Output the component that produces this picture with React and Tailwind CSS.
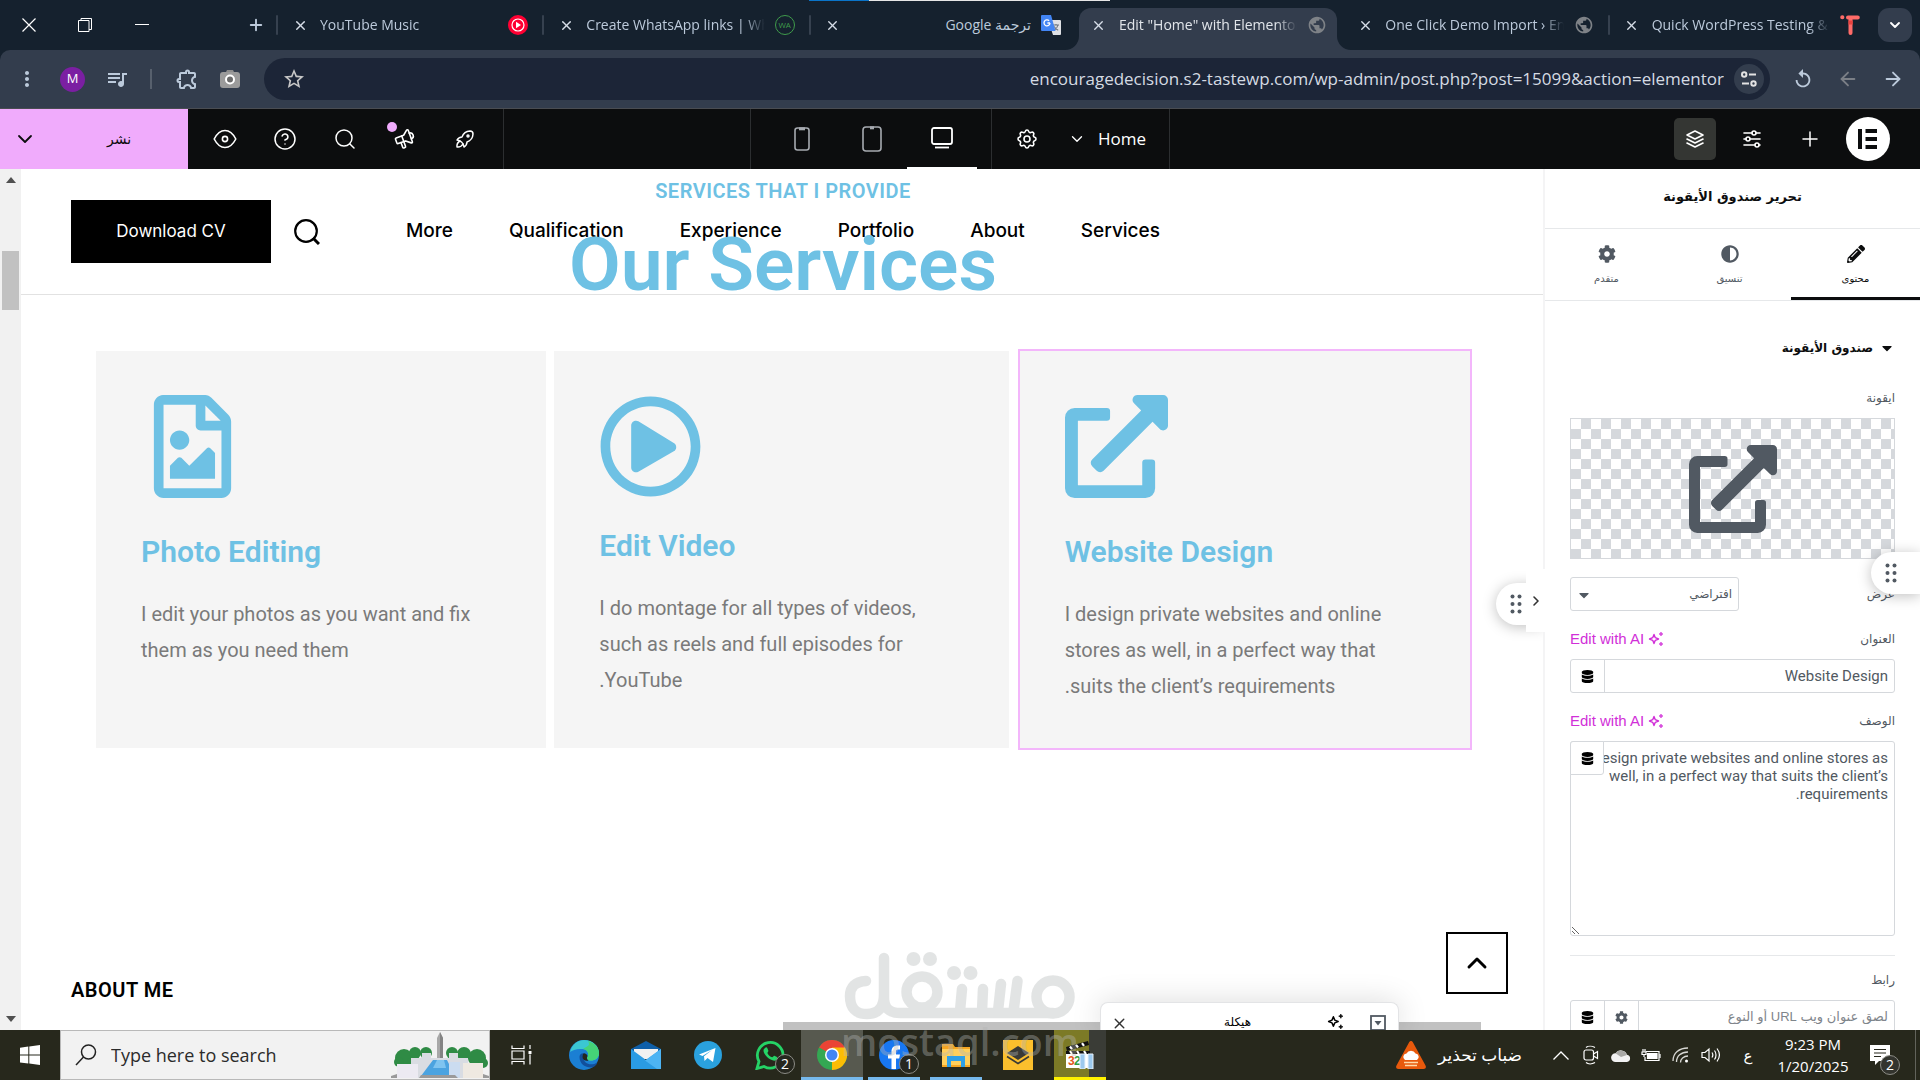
import React from "react";
import { FaRegFileImage, FaRegPlayCircle, FaExternalLinkAlt, FaPencilAlt, FaAdjust, FaCog, FaDatabase, FaCaretDown } from "react-icons/fa";
import { TbSettings, TbAdjustmentsHorizontal, TbStack2, TbSpeakerphone, TbRocket } from "react-icons/tb";
import { MdOutlineExtension, MdQueueMusic, MdStarOutline, MdMoreVert, MdPublic, MdReplay } from "react-icons/md";
import { X, Plus, ChevronDown, ChevronUp, ChevronRight, ArrowLeft, ArrowRight, Search, CircleHelp } from "lucide-react";

const UI = "font-['Open_Sans','DejaVu_Sans',sans-serif]";

/* ---------- Browser chrome ---------- */

function YtMusicIcon() {
  return (
    <svg viewBox="0 0 20 20" className="size-5">
      <circle cx="10" cy="10" r="10" fill="#ff0033" />
      <circle cx="10" cy="10" r="6" fill="none" stroke="#fff" strokeWidth="1.2" />
      <path d="M8 6.8v6.4l5-3.2z" fill="#fff" />
    </svg>
  );
}

function WaIcon() {
  return (
    <span className="flex size-5 items-center justify-center rounded-full border border-[#3f9b4b] text-[8px] text-[#3f9b4b]">WA</span>
  );
}

function TranslateIcon() {
  return (
    <svg viewBox="0 0 20 20" className="size-5">
      <path d="M7 5h12a1 1 0 0 1 1 1v13a1 1 0 0 1-1 1h-7z" fill="#dfe1e5" />
      <path d="M12 10h6M15 9v1M17 10c-.6 2.600-2.400 4.400-4 5.200M13.200 11.600c.8 1.600 2.200 2.800 4 3.600" stroke="#6b7480" strokeWidth="1.100" fill="none" />
      <path d="M1 0h9l4.500 16H1a1 1 0 0 1-1-1V1a1 1 0 0 1 1-1z" fill="#4285f4" />
      <path d="M9 8H6.400M9 8a3 3 0 1 1-.9-2.200" stroke="#fff" strokeWidth="1.300" fill="none" />
    </svg>
  );
}

function TasteIcon() {
  return (
    <svg viewBox="0 0 20 20" className="size-5">
      <g stroke="#ff6b68" strokeWidth="4" strokeLinecap="round">
        <path d="M2.200 2.200h.2M8 2.500h9.800M10.500 4v14" />
      </g>
      <path d="M8.500 5.500h4.200v4H8.500z" fill="#e8423f" />
    </svg>
  );
}

const tabs = [
  { title: "YouTube Music", icon: <YtMusicIcon />, divider: true },
  { title: "Create WhatsApp links | WhatsApp", icon: <WaIcon />, divider: true },
  { title: "ترجمة Google", icon: <TranslateIcon />, divider: true, rtl: true },
  { title: 'Edit "Home" with Elementor', icon: <MdPublic className="size-5 text-[#7e8287]" />, active: true },
  { title: "One Click Demo Import › Encourage", icon: <MdPublic className="size-5 text-[#7e8287]" /> },
  { title: "Quick WordPress Testing & Staging", icon: <TasteIcon />, divider: true },
];

function Flare({ right }) {
  return (
    <svg viewBox="0 0 14 14" className={right ? "absolute -right-[14px] bottom-0 size-[14px]" : "absolute -left-[14px] bottom-0 size-[14px]"}>
      <path d={right ? "M0 0v14h14A14 14 0 0 1 0 0z" : "M14 0v14H0A14 14 0 0 0 14 0z"} fill="#333d4d" />
    </svg>
  );
}

function Tab({ title, icon, divider, active, rtl }) {
  return (
    <div className="relative flex h-full min-w-0 flex-1 items-center">
      {divider && <span className="absolute left-0 h-5 w-0.5 rounded bg-[#36414f]" />}
      {active && (
        <span className="absolute inset-x-1 top-2 bottom-0 rounded-t-[12px] bg-[#333d4d]">
          <Flare />
          <Flare right />
        </span>
      )}
      <div className="relative flex w-full min-w-0 items-center pr-3.5 pl-4">
        <button aria-label="Close tab" className="flex size-4 shrink-0 items-center justify-center text-[#d7dee8]">
          <X className="size-[15px]" strokeWidth={2.200} />
        </button>
        <span
          dir={rtl ? "rtl" : "ltr"}
          className={
            "mr-2.5 ml-3 min-w-0 flex-1 overflow-hidden text-[14px] leading-5 whitespace-nowrap " +
            (rtl
              ? "text-[#bccadb]"
              : "[mask-image:linear-gradient(to_right,black_88%,transparent)] " + (active ? "text-[#e1e5ea]" : "text-[#bccadb]"))
          }
        >
          {title}
        </span>
        <span className="shrink-0">{icon}</span>
      </div>
    </div>
  );
}

function TabStrip() {
  return (
    <div className="relative flex h-[50px] shrink-0 items-center bg-[#15212e]">
      <div className="absolute top-0 left-[809px] flex h-px">
        <span className="w-[60px] bg-[#0a74c9]" />
        <span className="w-[241px] bg-[#e6e6e6]" />
      </div>
      <div className="flex w-[276px] shrink-0 items-center text-white">
        <button aria-label="Close window" className="flex w-[57px] justify-center">
          <svg viewBox="0 0 14 14" className="size-[14px]" stroke="currentColor" strokeWidth="1.200"><path d="M.5.5l13 13M13.500.5l-13 13" /></svg>
        </button>
        <button aria-label="Restore window" className="flex w-14 justify-center">
          <svg viewBox="0 0 14 14" className="size-[14px]" fill="none" stroke="currentColor"><path d="M.5 2.500h10.500v11H.5zM3 2.500v-2h10.500v11H11" /></svg>
        </button>
        <button aria-label="Minimize window" className="flex w-[58px] justify-center">
          <svg viewBox="0 0 14 14" className="size-[14px]" stroke="currentColor"><path d="M0 6.500h14" /></svg>
        </button>
        <button aria-label="New tab" className="ml-auto mr-2 flex w-6 justify-center text-[#bccadb]"><Plus className="size-[18px]" strokeWidth={2.500} /></button>
      </div>
      <div className="flex h-full min-w-0 flex-1">
        {tabs.map((t) => <Tab key={t.title} {...t} />)}
      </div>
      <button aria-label="Search tabs" className="mr-2 ml-1 flex size-[34px] shrink-0 items-center justify-center rounded-[11px] bg-[#333d4d] text-white">
        <ChevronDown className="size-4" strokeWidth={2.800} />
      </button>
    </div>
  );
}

function AddressBar() {
  return (
    <div className="shrink-0 bg-[#15212e]">
      <div className="flex h-[59px] items-center rounded-t-[10px] border-b border-[#4a4d52] bg-[#333d4d] text-[#bccadb]">
        <button aria-label="Menu" className="flex w-[54px] justify-center"><MdMoreVert className="size-6" /></button>
        <button aria-label="Profile" className="ml-1.5 flex size-[25px] items-center justify-center rounded-full bg-[#7b1fa2] text-[13px] text-white">M</button>
        <button aria-label="Media" className="ml-5 flex size-6 items-center"><MdQueueMusic className="size-6" /></button>
        <span className="ml-[21px] h-5 w-0.5 bg-[#57606d]" />
        <button aria-label="Extensions" className="ml-[22px]"><MdOutlineExtension className="size-6 -scale-x-100" /></button>
        <button aria-label="Screenshot" className="ml-[22px]">
          <svg viewBox="0 0 20 18" className="h-[18px] w-5">
            <path d="M6 2l1-2h6l1 2z" fill="#8d8d8d" />
            <rect y="2" width="20" height="16" rx="3" fill="#9b9b9b" />
            <circle cx="10" cy="9.500" r="4" fill="#6b6b6b" stroke="#fff" strokeWidth="2" />
          </svg>
        </button>
        <div className="ml-6 flex h-[42px] min-w-0 flex-1 items-center rounded-full bg-[#1c2537] pr-1.5 pl-[18px]">
          <button aria-label="Bookmark"><MdStarOutline className="size-6 text-[#c7c7c7]" /></button>
          <input aria-label="Address" className={"mr-2.5 min-w-0 flex-1 bg-transparent text-right text-[17px] text-[#d5dbe3] outline-none " + UI} defaultValue="encouragedecision.s2-tastewp.com/wp-admin/post.php?post=15099&action=elementor" />
          <button aria-label="Site settings" className="flex size-[30px] items-center justify-center rounded-full bg-[#333d4d]">
            <svg viewBox="0 0 16 16" className="size-4" fill="none" stroke="#e3e3e3" strokeWidth="2"><circle cx="3.200" cy="3.500" r="2.200" /><path d="M8 3.500h7M1 12.500h7" /><circle cx="12.500" cy="12.500" r="2.200" /></svg>
          </button>
        </div>
        <button aria-label="Reload" className="ml-[22px]"><MdReplay className="size-[22px]" /></button>
        <button aria-label="Back" className="ml-[23px] text-[#7b7f86]"><ArrowLeft className="size-[22px]" /></button>
        <button aria-label="Forward" className="mr-4 ml-[23px]"><ArrowRight className="size-[22px]" /></button>
      </div>
    </div>
  );
}

/* ---------- Editor top bar ---------- */

function IconBtn({ label, className = "w-[60px]", children }) {
  return <button aria-label={label} className={"relative flex h-full items-center justify-center " + className}>{children}</button>;
}

function EditorBar() {
  return (
    <div className="flex h-[60px] shrink-0 items-stretch bg-[#0c0d0e] text-white">
      <div className="flex flex-1">
        <div className="flex w-[188px] items-center bg-[#f0abfc] text-[#0c0d0e]">
          <button aria-label="Publish options" className="flex w-[50px] justify-center"><ChevronDown className="size-6" strokeWidth={1.800} /></button>
          <button className="flex-1 text-center font-['DejaVu_Sans',sans-serif] text-[14px]">نشر</button>
        </div>
        <div className="flex w-[316px] border-r border-[#2c2e30] pl-[7px]">
          <IconBtn label="Preview">
            <svg viewBox="0 0 24 20" className="h-5 w-6" fill="none" stroke="currentColor" strokeWidth="1.600"><path d="M1.200 10C4 4.500 7.500 1.500 12 1.500S20 4.500 22.800 10C20 15.500 16.500 18.500 12 18.500S4 15.500 1.200 10z" /><circle cx="12" cy="10" r="2.600" /></svg>
          </IconBtn>
          <IconBtn label="Help"><CircleHelp className="size-6" strokeWidth={1.500} /></IconBtn>
          <IconBtn label="Finder"><Search className="size-6" strokeWidth={1.500} /></IconBtn>
          <IconBtn label="What's new">
            <TbSpeakerphone className="size-6 -rotate-[20deg]" strokeWidth={1.600} />
            <span className="absolute top-[13px] left-3 size-2.5 rounded-full bg-[#f0abfc]" />
          </IconBtn>
          <IconBtn label="Checklist"><TbRocket className="size-6" strokeWidth={1.500} /></IconBtn>
        </div>
      </div>
      <div className="flex w-[242px] border-x border-[#2c2e30] pl-4">
        <IconBtn label="Mobile" className="w-[70px]">
          <svg viewBox="0 0 16 24" className="h-6 w-4" fill="none" stroke="#a6aab0" strokeWidth="1.600"><rect x="1" y="1" width="14" height="22" rx="2.500" /><path d="M5 1.800h6" strokeWidth="3" /></svg>
        </IconBtn>
        <IconBtn label="Tablet" className="w-[70px]">
          <svg viewBox="0 0 20 26" className="h-[26px] w-5" fill="none" stroke="#a6aab0" strokeWidth="1.600"><rect x="1" y="1" width="18" height="24" rx="3" /><path d="M8 1.800h4" strokeWidth="3" /></svg>
        </IconBtn>
        <IconBtn label="Desktop" className="w-[70px] border-b-2 border-white">
          <svg viewBox="0 0 22 22" className="size-[22px]" fill="none" stroke="#fff" strokeWidth="1.800"><rect x="1" y="1" width="20" height="16" rx="2" /><path d="M4 20.500h14" /></svg>
        </IconBtn>
      </div>
      <div className="flex w-[178px] items-center border-r border-[#2c2e30] pl-1.5">
        <IconBtn label="Page settings" className="w-[58px]"><TbSettings className="size-6" strokeWidth={1.600} /></IconBtn>
        <button className={"ml-3 flex items-center gap-3 text-[17px] font-medium " + UI}>
          <ChevronDown className="size-[18px]" strokeWidth={1.800} /><span>Home</span>
        </button>
      </div>
      <div className="flex flex-1 items-center justify-end">
        <button aria-label="Structure" className="flex size-[42px] items-center justify-center rounded-[5px] bg-[#343633]"><TbStack2 className="size-6" strokeWidth={1.600} /></button>
        <IconBtn label="Site settings" className="w-[72px]"><TbAdjustmentsHorizontal className="size-6" strokeWidth={1.600} /></IconBtn>
        <IconBtn label="Add element" className="w-[44px]"><Plus className="size-6" strokeWidth={1.500} /></IconBtn>
        <button aria-label="Elementor" className="mr-[30px] ml-3.5 flex size-11 items-center justify-center rounded-full bg-white">
          <svg viewBox="0 0 20 20" className="size-5" fill="#0c0d0e"><path d="M0 0h4v20H0zM7.500 0H19v4H7.500zM7.500 8H19v4H7.500zM7.500 16H19v4H7.500z" /></svg>
        </button>
      </div>
    </div>
  );
}

/* ---------- Page canvas ---------- */

const nav = ["More", "Qualification", "Experience", "Portfolio", "About", "Services"];

const cards = [
  { Icon: FaRegFileImage, title: "Photo Editing", text: "I edit your photos as you want and fix them as you need them", cls: "", gap: "mt-9" },
  { Icon: FaRegPlayCircle, title: "Edit Video", text: "I do montage for all types of videos, such as reels and full episodes for YouTube.", cls: "", gap: "mt-[30px]" },
  { Icon: FaExternalLinkAlt, title: "Website Design", text: "I design private websites and online stores as well, in a perfect way that suits the client’s requirements.", cls: "ml-[3px] outline-2 outline-[#f3b6fb]", gap: "mt-9" },
];

function Dots() {
  return (
    <svg viewBox="0 0 12 20" className="h-5 w-3" fill="#515962">
      {[2.500, 10, 17.500].map((y) => [2.500, 9.500].map((x) => <circle key={x + "-" + y} cx={x} cy={y} r="2" />))}
    </svg>
  );
}

function Sparkle({ className }) {
  return (
    <svg viewBox="0 0 16 16" className={className} fill="none" stroke="currentColor" strokeWidth="1.400" strokeLinejoin="round">
      <path d="M6 3.500L7.300 6.700 10.500 8 7.300 9.300 6 12.500 4.700 9.300 1.500 8 4.700 6.700z" />
      <path d="M13 1l.6 1.400 1.400.6-1.400.6L13 5l-.6-1.400L11 3l1.400-.6zM13 11l.6 1.400 1.400.6-1.400.6L13 15l-.6-1.400L11 13l1.400-.6z" fill="currentColor" strokeWidth=".6" />
    </svg>
  );
}

function Canvas() {
  return (
    <main className="relative flex min-w-0 flex-1 flex-col overflow-hidden bg-white font-['Roboto',sans-serif]">
      <header className="relative flex h-[126px] shrink-0 items-start border-b border-[#e2e2e2] pt-[31px] pl-[50px]">
        <button className="h-[63px] w-[200px] shrink-0 bg-black font-['Inter',sans-serif] text-[17px] text-white">Download CV</button>
        <button aria-label="Search" className="ml-5 flex h-[63px] w-8 items-center justify-center">
          <svg viewBox="0 0 26 26" className="size-[26px]" fill="none" stroke="#000" strokeWidth="2.200"><circle cx="12" cy="12" r="10.800" /><path d="M19 19l6 6" strokeWidth="3" /></svg>
        </button>
        <nav className="ml-[83px] flex h-[62px] w-[754px] items-center justify-between font-['Inter',sans-serif] text-[19px] font-medium text-black">
          {nav.map((n) => <a key={n} href="#">{n}</a>)}
        </nav>
        <div className="pointer-events-none absolute inset-x-0 top-2 text-center text-[#6ec1e4]">
          <p className="text-[20px] leading-7 font-semibold tracking-wide">SERVICES THAT I PROVIDE</p>
          <h2 className="mt-3.5 text-[75px] leading-[90px] font-semibold">Our Services</h2>
        </div>
      </header>
      <section className="mt-14 grid grid-cols-[450fr_454fr_453fr] gap-2 px-[75px]">
        {cards.map(({ Icon, title, text, cls, gap }) => (
          <article key={title} className={"h-[397px] bg-[#f5f5f5] pt-11 pr-12 pl-[45px] " + cls}>
            <Icon className="size-[103px] text-[#6ec1e4]" />
            <h3 className={"text-[30px] leading-9 font-semibold text-[#6ec1e4] " + gap}>{title}</h3>
            <p dir="rtl" className="mt-[26px] text-left text-[20px] leading-9 text-[#7a7a7a]">{text}</p>
          </article>
        ))}
      </section>
      <h4 className="mt-[229px] pl-[50px] text-[20px] leading-[26px] font-semibold tracking-wide text-black">ABOUT ME</h4>
      <button aria-label="Scroll to top" className="absolute right-[37px] bottom-9 flex size-[62px] items-center justify-center border-2 border-black bg-white">
        <ChevronUp className="size-8" strokeWidth={2.200} />
      </button>
      <div className="absolute right-16 bottom-0 h-2 w-[698px] bg-[#c1c1c1]" />
      <div className="absolute right-[146px] bottom-0 flex h-7 w-[299px] items-start rounded-t-[8px] border border-b-0 border-[#e3e4e6] bg-white px-2.5 pt-2.5 shadow-[0_0_30px_rgba(0,0,0,0.15)]">
        <button aria-label="Close structure" className="mt-0.5"><X className="size-[17px] text-[#333]" /></button>
        <span className="ml-auto pr-8 font-['DejaVu_Sans',sans-serif] text-[12px] leading-[18px] text-black">هيكلة</span>
        <Sparkle className="mr-[26px] ml-11 size-[17px]" />
        <svg viewBox="0 0 16 16" className="mt-0.5 mr-0.5 size-4" fill="none" stroke="#515962" strokeWidth="1.800"><rect x="1" y="1" width="14" height="14" /><path d="M4.500 6h7L8 10.500z" fill="#515962" stroke="none" /></svg>
      </div>
      <div className="absolute top-[414px] right-0.5 flex h-[42px] w-[47px] items-center rounded-l-full bg-white pl-3.5 shadow-[0_2px_14px_rgba(0,0,0,0.25)]"><Dots /></div>
      <button aria-label="Hide panel" className="absolute top-[400px] right-0 z-10 flex h-[63px] w-[19px] items-center justify-center bg-white"><ChevronRight className="size-4 text-[#333]" strokeWidth={2.400} /></button>
      <div className="absolute inset-y-0 right-0 w-0.5 bg-[#f4f4f5]" />
    </main>
  );
}

function Scrollbar() {
  return (
    <div className="flex w-[21px] shrink-0 flex-col items-center bg-[#f1f1f1] py-2 text-[#505050]">
      <svg viewBox="0 0 10 6" className="h-1.5 w-2.5" fill="currentColor"><path d="M0 6l5-6 5 6z" /></svg>
      <div className="mt-[68px] h-[59px] w-[17px] bg-[#c1c1c1]" />
      <svg viewBox="0 0 10 6" className="mt-auto h-1.5 w-2.5" fill="currentColor"><path d="M0 0l5 6 5-6z" /></svg>
    </div>
  );
}

/* ---------- Widget panel ---------- */

function FieldHead({ id, label }) {
  return (
    <div className="flex h-6 items-center justify-between">
      <label htmlFor={id} className="text-[12px] text-[#515962]">{label}</label>
      <button dir="ltr" className="flex items-center gap-1 font-['Liberation_Sans',sans-serif] text-[15px] text-[#d12fd8]">Edit with AI <Sparkle className="size-4" /></button>
    </div>
  );
}

function PanelTab({ Icon, label, active }) {
  return (
    <button className={"flex flex-col items-center border-b-3 pt-4 " + (active ? "w-[129px] border-[#0c0d0e] text-[#0c0d0e]" : "flex-1 border-transparent text-[#515962]")}>
      <Icon className="size-[18px]" />
      <span className="mt-2 text-[10px] leading-4">{label}</span>
    </button>
  );
}

function Panel() {
  return (
    <aside dir="rtl" className="relative flex w-[375px] shrink-0 flex-col overflow-hidden bg-white font-['DejaVu_Sans',sans-serif]">
      <h1 className="flex h-[60px] shrink-0 items-center justify-center border-b border-[#e6e8ea] pb-1 text-[13px] font-bold text-[#0c0d0e]">تحرير صندوق الأيقونة</h1>
      <div className="flex h-[72px] shrink-0 border-b border-[#e6e8ea]">
        <PanelTab Icon={FaPencilAlt} label="محتوى" active />
        <PanelTab Icon={FaAdjust} label="تنسيق" />
        <PanelTab Icon={FaCog} label="متقدم" />
      </div>
      <div className="px-[25px] pt-[35px]">
        <button className="flex h-6 items-center gap-1.5 text-[12px] font-bold text-[#0c0d0e]"><FaCaretDown className="size-4" />صندوق الأيقونة</button>
        <p className="mt-[26px] h-7 text-[12px] leading-6 text-[#515962]">ايقونة</p>
        <div className="mt-1 flex h-[141px] items-center justify-center border border-[#d5d8dc] bg-[repeating-conic-gradient(#d5d8dc_0_25%,#fff_0_50%)] bg-[length:20px_20px]">
          <FaExternalLinkAlt className="size-[88px] text-[#515962]" />
        </div>
        <div className="mt-[18px] flex h-[34px] items-center justify-between">
          <label htmlFor="view" className="text-[12px] text-[#515962]">عرض</label>
          <div className="relative w-[169px]">
            <select id="view" className="h-[34px] w-full appearance-none rounded-[3px] border border-[#d5d8dc] bg-white px-1.5 text-[12px] text-[#515962]"><option>افتراضي</option></select>
            <FaCaretDown className="pointer-events-none absolute top-2.5 left-1.5 size-4 text-[#515962]" />
          </div>
        </div>
        <div className="mt-4">
          <FieldHead id="title" label="العنوان" />
          <div className="mt-2 flex h-[34px] rounded-[3px] border border-[#d5d8dc]">
            <input id="title" defaultValue="Website Design" className="min-w-0 flex-1 bg-transparent px-1.5 font-['Roboto',sans-serif] text-[15px] text-[#515962] outline-none" />
            <button aria-label="Dynamic title" className="flex w-[34px] items-center justify-center border-r border-[#d5d8dc] text-black"><FaDatabase className="size-[13px]" /></button>
          </div>
        </div>
        <div className="mt-4">
          <FieldHead id="desc" label="الوصف" />
          <div className="relative mt-2">
            <textarea id="desc" defaultValue="I design private websites and online stores as well, in a perfect way that suits the client’s requirements." className="block h-[195px] w-full resize rounded-[3px] border border-[#d5d8dc] px-1.5 py-[7px] font-['Roboto',sans-serif] text-[15px] leading-[18px] text-[#515962] outline-none" />
            <button aria-label="Dynamic description" className="absolute top-0 left-0 flex size-[34px] items-center justify-center rounded-tl-[3px] rounded-br-[3px] border border-[#d5d8dc] bg-white text-black"><FaDatabase className="size-[13px]" /></button>
          </div>
        </div>
        <hr className="mt-[19px] border-[#e6e8ea]" />
        <label htmlFor="link" className="mt-3 block text-[12px] leading-6 text-[#515962]">رابط</label>
        <div className="mt-2 flex h-[34px] rounded-[3px] border border-[#d5d8dc]">
          <input id="link" placeholder="لصق عنوان ويب URL أو النوع" className="min-w-0 flex-1 bg-transparent px-1.5 font-['Liberation_Sans','DejaVu_Sans',sans-serif] text-[13px] placeholder-[#7f858b] outline-none" />
          <button aria-label="Link options" className="flex w-[34px] items-center justify-center border-r border-[#d5d8dc] text-[#515962]"><FaCog className="size-[13px]" /></button>
          <button aria-label="Dynamic link" className="flex w-[34px] items-center justify-center border-r border-[#d5d8dc] text-black"><FaDatabase className="size-[13px]" /></button>
        </div>
      </div>
      <div className="absolute top-[383px] right-0 flex h-[42px] w-[49px] items-center justify-end rounded-l-full bg-white pl-3.5 shadow-[0_2px_14px_rgba(0,0,0,0.25)]"><Dots /></div>
    </aside>
  );
}

/* ---------- Taskbar ---------- */

function CityArt() {
  return (
    <svg viewBox="0 0 98 46" className="h-[46px] w-[98px]">
      <g fill="#2f8b45">
        <circle cx="13" cy="26" r="9" /><circle cx="24" cy="21" r="6" /><circle cx="35" cy="21" r="6" /><circle cx="8" cy="30" r="5" /><circle cx="21" cy="30" r="5" />
        <circle cx="61" cy="21" r="6" /><circle cx="73" cy="22" r="7" /><circle cx="86" cy="26" r="9" /><circle cx="92" cy="31" r="5" />
      </g>
      <path d="M46 30V6l3-6 3 6v24z" fill="#a8a8a8" /><path d="M49 0l3 6v24h-3z" fill="#838383" />
      <path d="M20 46V26h11v-5h9v5h18v-5h9v5h10v20z" fill="#d9dce2" />
      <path d="M42 28h14l8 16H30z" fill="#4ba3e0" /><path d="M46 28h7l2 8H42z" fill="#7fc4f0" />
      <rect x="6" y="32" width="21" height="14" fill="#eceaf2" /><rect x="58" y="30" width="11" height="16" fill="#cbdcf0" /><rect x="72" y="31" width="20" height="15" fill="#efe9e1" />
      <path d="M0 46v-2l6-2v4zM98 46v-2l-6-2v4zM28 46l2-3h34l3 3z" fill="#9a9a9a" />
    </svg>
  );
}

function Badge({ n }) {
  return <span className="absolute top-3.5 left-5 flex size-5 items-center justify-center rounded-full border border-[#8c8c86] bg-[#26271f] text-[14px] leading-none text-white">{n}</span>;
}

const apps = [
  { name: "Task View", icon: <svg viewBox="0 0 22 20" className="h-5 w-[22px]" fill="none" stroke="#fff" strokeWidth="1.200"><path d="M1 .5v3h12v-3M1 19.500v-3h12v3M1 6h12v8H1zM19 0v4M19 9.500v10" /><path d="M17.500 6h3v3h-3z" fill="#fff" stroke="none" /></svg> },
  { name: "Edge", icon: (
    <svg viewBox="0 0 30 30" className="size-[30px]"><circle cx="15" cy="15" r="15" fill="#1b7fd3" /><path d="M1 12C3 4 9 0 15 0c9 0 15 6 15 13 0 5-4 7.500-8 7.500s-4.500-2-3.500-3.500S20 9.500 14 9 3 10 1 12z" fill="#3bc7d2" /><path d="M19 1c7 2 11 7 11 12 0 5-4 7.500-8 7.500s-4.500-2-3.500-3.500S20 10 14 9c4-3 8-3 5-8z" fill="#45d377" /><path d="M10.500 17c0 7 6 10.500 11 10.500 3 0 6-2 7-5-7 4-14 1-14-5 0-2 1-3.500 2-4-4-1-6 1-6 3.500z" fill="#124f9c" /><path d="M14 14c2-1 4 0 4.500 2-1 2-.5 3.500 1 4.500-3 1-6-1-6-3.500z" fill="#26271c" /></svg>
  ) },
  { name: "Mail", icon: <svg viewBox="0 0 30 28" className="h-7 w-[30px]"><path d="M0 8L15 0l15 8v6H0z" fill="#0f5fa8" /><path d="M3 8h24v10H3z" fill="#f1f1f1" /><path d="M0 8l15 11L30 8v20H0z" fill="#2a9be3" /><path d="M30 8L14 19.500 26 28h4z" fill="#4db4f3" /></svg> },
  { name: "Telegram", icon: <svg viewBox="0 0 28 28" className="size-7"><circle cx="14" cy="14" r="14" fill="#2aa1de" /><path d="M5 13.500L21.500 7 19 21l-5.500-4-3 3-.5-4.800L18 9l-9.500 6z" fill="#fff" /></svg> },
  { name: "WhatsApp", badge: 2, icon: <svg viewBox="0 0 30 30" className="size-[30px]"><path d="M2 28.500l2-7A12.800 12.800 0 1 1 9 26.500z" fill="none" stroke="#25d366" strokeWidth="2.800" /><path d="M10 8c1-1 2-.8 2.400.2l1 2.500c.2.600-1 1.800-1 2.200.8 2 2.800 3.700 4.800 4.400.6.200 1.600-1.800 2.200-1.500l2.600 1.300c1 .6.200 2.500-.8 3.100C17 22.500 8 15 8.500 10c.1-.8.9-1.400 1.500-2z" fill="#25d366" /></svg> },
  { name: "Chrome", active: true, icon: <svg viewBox="0 0 30 30" className="size-[30px]"><circle cx="15" cy="15" r="15" fill="#34a853" /><path d="M15 15L2 7.500A15 15 0 0 1 28 7.500z" fill="#ea4335" /><path d="M15 15V7.500h13A15 15 0 0 1 15 30z" fill="#fbbc05" /><path d="M2 7.500L15 15l-6 8z" fill="#34a853" /><circle cx="15" cy="15" r="7" fill="#fff" /><circle cx="15" cy="15" r="5.500" fill="#4285f4" /></svg> },
  { name: "Facebook", badge: 1, line: "bg-[#76b9ed]", icon: <svg viewBox="0 0 30 30" className="size-[30px]"><circle cx="15" cy="15" r="15" fill="#1877f2" /><path d="M12.500 29V18.500H9V14.500h3.500v-3c0-4 2.500-6 6-6h2.500v4h-2c-1.500 0-2 .8-2 2v3h4l-.8 4H17V29z" fill="#fff" /></svg> },
  { name: "File Explorer", line: "bg-[#76b9ed]", icon: <svg viewBox="0 0 28 24" className="h-6 w-7"><path d="M0 1h11l2 3h15v20H0z" fill="#f5a623" /><path d="M0 6h28v16H0z" fill="#ffcf5c" /><path d="M5 24V13h18v11h-4v-6h-10v6z" fill="#2e9fe6" /></svg> },
  { name: "Layers", icon: <svg viewBox="0 0 30 30" className="size-[30px]"><path d="M0 0h30v30H0z" fill="#fbbf2d" /><path d="M4 13l11-7 11 7-11 7z" fill="#3a3a36" /><path d="M4 16.500l11 7 11-7" fill="none" stroke="#3a3a36" strokeWidth="1.600" /></svg> },
  { name: "Media Player", media: true, icon: <svg viewBox="0 0 28 28" className="size-7"><path d="M0 11h24v16H0z" fill="#fff" /><path d="M0 6L22 0l1 4L1 10zM0 10h24v3H0z" fill="#111" /><path d="M4 5.500l2 2.700M10 3.800l2 2.700M16 2.200l2 2.700M4 10l2 3M11 10l2 3M18 10l2 3" stroke="#fff" strokeWidth="2.200" /><text x="2" y="24" fontSize="12" fontWeight="700" fontFamily="Liberation Sans, sans-serif" fill="#e4571b">3</text><text x="8" y="24" fontSize="12" fontWeight="700" fontFamily="Liberation Sans, sans-serif" fill="#2f9e44">2</text><path d="M14 13h5v15h-5zM22 13h5v15h-5z" fill="#9cc9ee" stroke="#e8f2fb" /></svg> },
];

function TaskApp({ name, icon, badge, active, line, media }) {
  return (
    <button aria-label={name} className={"relative flex h-full w-[62px] items-center justify-center " + (active ? "bg-[#57594f]" : "")}>
      {media && <span className="absolute inset-x-[5px] inset-y-0 bg-linear-to-r from-[#7c7a26] from-68% to-[#3a3c36] to-68%" />}
      <span className="relative">{icon}{badge && <Badge n={badge} />}</span>
      {active && <span className="absolute inset-x-0 bottom-0 h-[3px] bg-[#76b9ed]" />}
      {line && <span className={"absolute inset-x-[5px] bottom-0 h-[3px] " + line} />}
      {media && <span className="absolute inset-x-[5px] bottom-0 h-[3px] bg-[#fff100]" />}
    </button>
  );
}

function Tray() {
  return (
    <div className="ml-auto flex h-full items-center text-white">
      <button className="mr-6 flex items-center gap-3">
        <svg viewBox="0 0 30 28" className="h-7 w-[30px]"><path d="M13 1.500c1-2 3-2 4 0l12.500 23c1 2 0 3.500-2 3.500h-25c-2 0-3-1.500-2-3.500z" fill="#e8590c" /><path d="M9 19a3.500 3.500 0 0 1 1.500-6.500 5 5 0 0 1 9 0A3.500 3.500 0 0 1 21 19z" fill="#fff" /><path d="M8 21.500h14M9 24.500h12" stroke="#ffd9a8" strokeWidth="1.600" /></svg>
        <span dir="rtl" className="text-[17px]">ضباب تحذير</span>
      </button>
      <button aria-label="Hidden icons" className="flex w-[30px] justify-center"><svg viewBox="0 0 16 9" className="h-[9px] w-4" fill="none" stroke="#fff" strokeWidth="1.300"><path d="M.5 8.500L8 1l7.500 7.500" /></svg></button>
      <button aria-label="Meet now" className="flex w-[30px] justify-center"><svg viewBox="0 0 16 20" className="h-5 w-4" fill="none" stroke="#fff" strokeWidth="1.200"><rect x="1" y="5" width="9.500" height="10" rx="2" /><path d="M10.500 9l4-2.500v7l-4-2.500M3 2.500C5 .8 9 .8 12 2.500M3 17.500c2 1.700 6 1.700 9 0" /></svg></button>
      <button aria-label="OneDrive" className="flex w-[30px] justify-center"><svg viewBox="0 0 20 13" className="h-[13px] w-5"><path d="M4.500 13a4.400 4.400 0 0 1 0-8.800 6.500 6.500 0 0 1 11.500 1.500A3.700 3.700 0 0 1 16 13z" fill="#f2f2f2" /><path d="M4.500 4.200A6.500 6.500 0 0 1 14 3l2 3-6 2z" fill="#a9a9a6" /></svg></button>
      <button aria-label="Battery" className="flex w-[30px] justify-center"><svg viewBox="0 0 20 13" className="h-[13px] w-5" fill="none" stroke="#fff" strokeWidth="1.200"><path d="M5 2.500h13v9H4V8" /><path d="M6.500 4.500h9.500v5H6.500z" fill="#fff" /><path d="M19 5v4M1 3h4v2.500H1zM2 3V0M4 3V0M3 5.500V8" /></svg></button>
      <button aria-label="Wi-Fi" className="flex w-[30px] justify-center"><svg viewBox="0 0 18 16" className="h-4 w-[18px]" fill="none" stroke="#d8d8d4" strokeWidth="1.300"><path d="M1 14C1 6 7 1 16 1M4.500 15C4.500 9 9 5 16 5M8.500 15.500C8.500 12 11.500 9 16 9" /><circle cx="14.500" cy="14" r="1.500" fill="#fff" stroke="none" /></svg></button>
      <button aria-label="Volume" className="flex w-[30px] justify-center"><svg viewBox="0 0 20 16" className="h-4 w-5" fill="none" stroke="#fff" strokeWidth="1.200"><path d="M1 5.500h3L8 2v12l-4-3.500H1zM11 5.500c1 1.500 1 3.500 0 5M13.500 3.500c2 2.500 2 6.500 0 9M16 1.500c3 4 3 9 0 13" /></svg></button>
      <span className="w-[44px] text-center text-[15px]">ع</span>
      <button className="flex w-[86px] flex-col items-center text-[15px] leading-[22px]"><span>9:23 PM</span><span>1/20/2025</span></button>
      <button aria-label="Notifications" className="relative ml-0.5 mr-[13px] flex w-11 justify-center">
        <svg viewBox="0 0 20 20" className="size-5"><path d="M0 0h20v16H9l-4 4v-4H0z" fill="#fff" /><path d="M4 4.500h12M4 8h12M4 11.500h7" stroke="#26271c" strokeWidth="1.200" /></svg>
        <span className="absolute top-2.5 left-[22px] flex size-5 items-center justify-center rounded-full border border-[#8c8c86] bg-[#33342e] text-[14px] leading-none">2</span>
      </button>
      <span className="mr-1 h-full w-px bg-[#62635b]" />
    </div>
  );
}

function Taskbar() {
  return (
    <footer className={"flex h-[50px] shrink-0 items-center bg-[#27281c] " + UI}>
      <button aria-label="Start" className="flex w-[60px] justify-center">
        <svg viewBox="0 0 20 20" className="size-5" fill="#fff"><path d="M0 2.700l8.300-1.100v8H0zM9.300 1.500L20 0v9.600H9.300zM0 10.500h8.300v8L0 17.400zM9.300 10.500H20V20L9.300 18.500z" /></svg>
      </button>
      <div className="flex h-full w-[430px] items-center border border-[#b9b9b9] bg-[#f2f2f2] pl-3.5">
        <svg viewBox="0 0 22 22" className="size-[22px]" fill="none" stroke="#222" strokeWidth="1.500"><circle cx="13.500" cy="8" r="7" /><path d="M8.500 13L1 21" /></svg>
        <input aria-label="Search" placeholder="Type here to search" className="ml-3.5 min-w-0 flex-1 bg-transparent text-[18px] placeholder-[#2b2b2b] outline-none" />
        <CityArt />
      </div>
      <div className="ml-px flex h-full">{apps.map((a) => <TaskApp key={a.name} {...a} />)}</div>
      <Tray />
    </footer>
  );
}

function Watermark() {
  return (
    <div className="pointer-events-none absolute bottom-5 left-[840px] flex w-[240px] flex-col items-center">
      <svg viewBox="0 0 240 74" className="h-[74px] w-[240px] text-[#8f9696] opacity-25" fill="none" stroke="currentColor" strokeWidth="10.500" strokeLinecap="round">
        <circle cx="213" cy="49" r="16.500" />
        <path d="M213 65H60Q44 65 44 50V10M44 46Q44 66 27 66Q10 66 10 48Q10 34 26 33M177.500 33l-4 30M161 36l-3 27M143 41l-1 22M122 41l-2 22" />
        <circle cx="82" cy="44" r="15.500" />
        <g fill="currentColor" stroke="none"><circle cx="73.500" cy="11" r="7" /><circle cx="90" cy="11" r="7" /><circle cx="114" cy="25" r="7" /><circle cx="130.500" cy="25" r="7" /></g>
      </svg>
      <span className="font-['Open_Sans',sans-serif] text-[38px] leading-[38px] font-semibold text-[#b4b6b6]/40">mostaql.com</span>
    </div>
  );
}

export default function App() {
  return (
    <div className={"relative flex h-screen flex-col overflow-hidden " + UI}>
      <TabStrip />
      <AddressBar />
      <EditorBar />
      <div className="flex min-h-0 flex-1">
        <Scrollbar />
        <Canvas />
        <Panel />
      </div>
      <Taskbar />
      <Watermark />
    </div>
  );
}
